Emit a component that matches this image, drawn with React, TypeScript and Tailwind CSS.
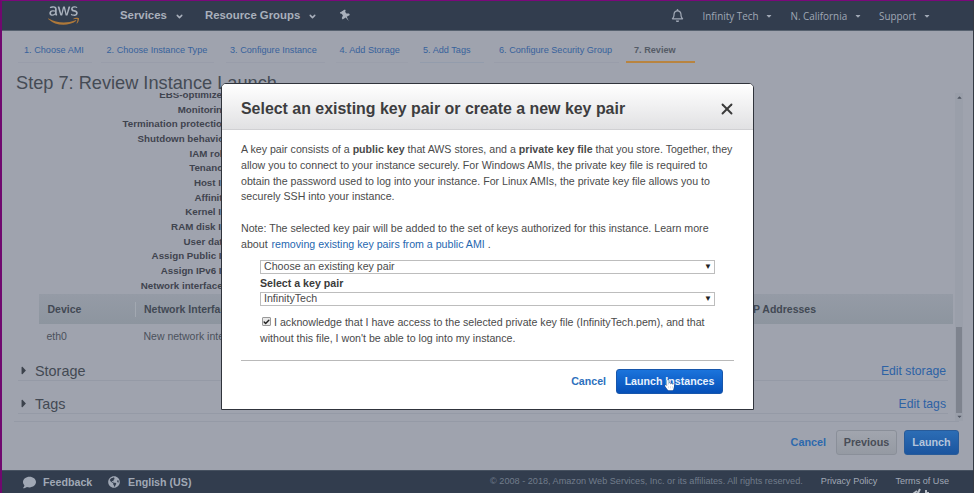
import { FaAws, FaRegBell, FaCaretDown, FaCaretRight, FaCaretUp, FaComment, FaGlobeAmericas, FaHandPointer } from "react-icons/fa";
import { Check, ChevronDown, X } from "lucide-react";

const steps = [
  { label: "1. Choose AMI", box: "ml-[16px] w-[74px]", pad: "pl-[6px]", line: "border-[#999daa]" },
  { label: "2. Choose Instance Type", box: "ml-[9px] w-[113px]", pad: "pl-[5.5px]", line: "border-[#999daa]" },
  { label: "3. Configure Instance", box: "ml-[12px] w-[99px]", pad: "pl-[4px]", line: "border-[#999daa]" },
  { label: "4. Add Storage", box: "ml-[11px] w-[72px]", pad: "pl-[3.5px]", line: "border-[#9b9fab]" },
  { label: "5. Add Tags", box: "ml-[12px] w-[64px]", pad: "pl-[3px]", line: "border-[#939cac]" },
  { label: "6. Configure Security Group", box: "ml-[10px] w-[125px]", pad: "pl-[5px]", line: "border-[#999daa]" },
];

const labels = [
  "EBS-optimized",
  "Monitoring",
  "Termination protection",
  "Shutdown behavior",
  "IAM role",
  "Tenancy",
  "Host ID",
  "Affinity",
  "Kernel ID",
  "RAM disk ID",
  "User data",
  "Assign Public IP",
  "Assign IPv6 IP",
  "Network interfaces",
];

function NavBar() {
  return (
    <header className="flex h-[30px] shrink-0 items-center border-b border-[#56616f] bg-[#323d4e] text-[#a9b0bc]">
      <svg width="0" height="0" className="absolute">
        <linearGradient id="aws" gradientUnits="userSpaceOnUse" x1="0" y1="0" x2="0" y2="512">
          <stop offset="0.58" stopColor="#a9b1bd" />
          <stop offset="0.58" stopColor="#ae7839" />
        </linearGradient>
      </svg>
      <FaAws fill="url(#aws)" className="ml-[46px] h-[25px] w-[31px]" />
      <div className="ml-[41px] w-[48px] text-[11.4px] font-bold">Services</div>
      <ChevronDown className="ml-[7px] mt-[2px] size-[9px]" strokeWidth={4} />
      <div className="ml-[21px] w-[96px] text-[11.35px] font-bold">Resource Groups</div>
      <ChevronDown className="ml-[7px] mt-[2px] size-[9px]" strokeWidth={4} />
      <svg className="ml-[23px] h-[12px] w-[11px] -rotate-[32deg]" viewBox="0 0 11 12" fill="currentColor">
        <path d="M2.5 0h6v1.5l-1 .6v2.2l2.3 1.5v1.6H6.1L5.5 12l-.6-4.6H1.2V5.8l2.3-1.5V2.1l-1-.6z" />
      </svg>
      <div className="ml-auto flex items-center font-['Open_Sans',sans-serif] text-[9.9px] text-[#a0a8b5]">
        <FaRegBell className="mr-[19px] size-[13px]" />
        <div className="mt-[2px] flex w-[88px] items-center gap-[7px]">Infinity Tech<FaCaretDown className="size-[8px]" /></div>
        <div className="mt-[2px] flex w-[88.5px] items-center gap-[7px]">N. California<FaCaretDown className="size-[8px]" /></div>
        <div className="mt-[2px] flex w-[94px] items-center gap-[7px]">Support<FaCaretDown className="size-[8px]" /></div>
      </div>
    </header>
  );
}

function Wizard() {
  return (
    <nav className="flex h-[32px] shrink-0 text-[9.15px] leading-[38px] text-[#37629c]">
      {steps.map((s) => (
        <div key={s.label} className={`h-[32px] shrink-0 border-b ${s.box} ${s.pad} ${s.line}`}>{s.label}</div>
      ))}
      <div className="ml-[7px] h-[32px] w-[69px] border-b-2 border-[#b88440] pl-[8px] font-bold text-[#555b66]">7. Review</div>
    </nav>
  );
}

function Section({ title, link }: { title: string; link: string }) {
  return (
    <div className="ml-[16px] mr-[7px] flex h-[33px] items-end border-b border-[#959aa6] leading-[17px]">
      <FaCaretRight className="mb-[3px] ml-[2px] h-[13px] w-[8px] text-[#3c424c]" />
      <div className="ml-[7px] text-[14.4px] text-[#434953]">{title}</div>
      <div className="ml-auto pr-[2px] text-[12.2px] text-[#2d62a5]">{link}</div>
    </div>
  );
}

function Review() {
  return (
    <div className="flex h-[328px] shrink-0 overflow-hidden">
      <div className="w-[953px] shrink-0">
        <div className="-mt-[5px] w-[226px] text-right text-[9.75px] font-bold leading-[14.67px] text-[#3f444f]">
          {labels.map((l) => <div key={l}>{l}</div>)}
        </div>
        <div className="ml-[37px] mt-[1px] flex h-[30px] w-[914px] items-center bg-linear-to-b from-[#959ba6] to-[#8d959f] text-[10.5px] font-bold text-[#424954]">
          <div className="w-[97px] border-r border-[#a2a8b1] pl-[8.5px]">Device</div>
          <div className="pl-[8px]">Network Interface</div>
          <div className="ml-auto w-[200px]">P Addresses</div>
        </div>
        <div className="ml-[37px] flex h-[24px] items-center text-[10.5px] text-[#4b515c]">
          <div className="w-[97px] pl-[7.5px]">eth0</div>
          <div className="pl-[7.5px]">New network interface</div>
        </div>
        <Section title="Storage" link="Edit storage" />
        <Section title="Tags" link="Edit tags" />
      </div>
      <div className="flex w-[8px] flex-col items-center bg-[#9a9faa] text-[#4f5561]">
        <FaCaretUp className="mt-[1px] size-[7px]" />
        <div className="mt-auto h-[86px] w-[6px] bg-[#7e838e]" />
        <FaCaretDown className="mb-[1px] size-[7px]" />
      </div>
    </div>
  );
}

function Dialog() {
  return (
    <section className="absolute left-[219px] top-[82px] flex h-[327px] w-[533px] flex-col overflow-hidden rounded-t-[5px] border-[1.5px] border-[#30343c] bg-white text-[10.64px] leading-[15.75px] text-[#4a4a4a]">
      <div className="flex h-[46px] shrink-0 items-center justify-between border-b border-[#d0d0d3] bg-linear-to-b from-white to-[#e1e1e3] pl-[19px] pr-[17px] pt-[4px]">
        <h2 className="whitespace-nowrap text-[15.93px] font-bold text-[#3d3d3f]">Select an existing key pair or create a new key pair</h2>
        <X className="size-[18px] text-[#3a3a3a]" strokeWidth={2.5} />
      </div>
      <div className="whitespace-nowrap px-[19px] pt-[12px]">
        <p>
          A key pair consists of a <b>public key</b> that AWS stores, and a <b>private key file</b> that you store. Together, they<br />
          allow you to connect to your instance securely. For Windows AMIs, the private key file is required to<br />
          obtain the password used to log into your instance. For Linux AMIs, the private key file allows you to<br />
          securely SSH into your instance.
        </p>
        <p className="mt-[15.75px]">
          Note: The selected key pair will be added to the set of keys authorized for this instance. Learn more<br />
          about <span className="pl-[1px] text-[#2667b0]">removing existing key pairs from a public AMI</span> .
        </p>
        <div className="ml-[19px] mt-[8px] w-[455px]">
          <div className="flex h-[14px] items-center justify-between border border-[#bdbdbd] pl-[3px] pr-[2px]">
            Choose an existing key pair<span className="text-[8px] text-[#222]">▼</span>
          </div>
          <div className="h-[17.5px] leading-[18px] font-bold text-[#3b3b3b]">Select a key pair</div>
          <div className="flex h-[14px] items-center justify-between border border-[#bdbdbd] pl-[3px] pr-[2px]">
            InfinityTech<span className="text-[8px] text-[#222]">▼</span>
          </div>
          <p className="mt-[9px]">
            <span className="ml-[2px] mr-[3px] inline-flex size-[9px] items-center justify-center rounded-[1px] border border-[#999] bg-[#e8e8e8] text-[#222]"><Check className="size-[8px]" strokeWidth={5} /></span>
            I acknowledge that I have access to the selected private key file (InfinityTech.pem), and that<br />
            without this file, I won't be able to log into my instance.
          </p>
        </div>
      </div>
      <div className="mx-[19px] mt-[14px] flex border-t border-[#b9b9b9] pt-[8px]">
        <div className="ml-auto mr-[10px] self-center font-bold text-[#2c70bd]">Cancel</div>
        <button className="mr-[11px] h-[25px] w-[107px] whitespace-nowrap rounded-[3px] border border-[#1756ab] bg-linear-to-b from-[#1b74dc] to-[#0650b8] font-bold text-[#e9f2fc]">Launch Instances</button>
      </div>
      <FaHandPointer className="absolute left-[443px] top-[295px] h-[12px] w-[9px] text-white" stroke="#33507c" strokeWidth={45} style={{ paintOrder: "stroke", overflow: "visible" }} />
    </section>
  );
}

export default function App() {
  return (
    <main className="relative flex h-[493px] w-[974px] flex-col overflow-hidden whitespace-nowrap border-l-2 border-r border-t border-l-[#70086f] border-r-[#343942] border-t-[#7b087b] bg-[#9fa3ae] font-['Liberation_Sans',Arial,sans-serif]">
      <NavBar />
      <Wizard />
      <h1 className="h-[30px] shrink-0 pl-[14px] pt-[7px] text-[18.2px] leading-[26px] text-[#454b55]">Step 7: Review Instance Launch</h1>
      <Review />
      <div className="ml-[12px] mr-[14px] flex h-[49px] shrink-0 items-center justify-end border-t border-[#959aa6] pb-[8px] text-[10.8px] font-bold">
        <span className="mr-[10px] text-[#2d69ad]">Cancel</span>
        <button className="mr-[7px] h-[25px] w-[61px] rounded-[3px] border border-[#8a8f99] bg-linear-to-b from-[#a1a5ae] to-[#959aa3] text-[#484d57]">Previous</button>
        <button className="h-[25px] w-[55px] rounded-[3px] border border-[#285b99] bg-linear-to-b from-[#2c6db5] to-[#1b559f] text-[#b5c5db]">Launch</button>
      </div>
      <footer className="flex h-[23px] shrink-0 items-center border-t border-[#465160] bg-[#323d4e] text-[9.1px] text-[#a0a8b5]">
        <FaComment className="ml-[21px] size-[13px]" />
        <b className="ml-[7px] w-[50px] text-[10.7px]">Feedback</b>
        <FaGlobeAmericas className="ml-[15px] size-[12px]" />
        <b className="ml-[8px] text-[10.7px]">English (US)</b>
        <span className="ml-auto mr-[18px] text-[9.15px] text-[#717c8b]">© 2008 - 2018, Amazon Web Services, Inc. or its affiliates. All rights reserved.</span>
        <span className="mr-[18px]">Privacy Policy</span>
        <span className="mr-[24px]">Terms of Use</span>
      </footer>
      <Dialog />
      <svg className="absolute left-[910px] top-[487px]" width="20" height="6" viewBox="0 0 20 6" fill="none" stroke="#b9bfc8" strokeWidth="2">
        <path d="M1 6 5 3M5.5 6 8 1M14 2v4M14 5h3" />
      </svg>
    </main>
  );
}
